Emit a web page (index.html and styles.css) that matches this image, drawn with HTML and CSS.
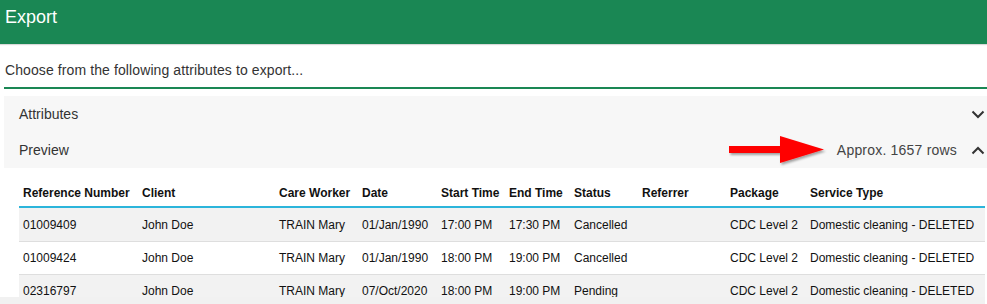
FILE: index.html
```html
<!DOCTYPE html>
<html lang="en">
<head>
    <meta charset="UTF-8">
    <meta name="viewport" content="width=device-width, initial-scale=1.0">
    <title>Export</title>
    <link rel="stylesheet" href="styles.css">
</head>
<body>
    <div class="modal-header">Export</div>

    <div class="modal-body">
        <p class="intro">Choose from the following attributes to export...</p>

        <!-- Accordion sections -->
        <div class="accordion">
            <div class="acc-row">
                <span class="acc-title">Attributes</span>
                <svg class="chevron" width="14" height="9" viewBox="0 0 14 9">
                    <polyline points="1.5,1.5 7,7 12.5,1.5" fill="none" stroke="#333" stroke-width="2"/>
                </svg>
            </div>
            <div class="acc-row">
                <span class="acc-title">Preview</span>
                <span class="row-count">
                    <svg class="arrow" width="98" height="32" viewBox="0 0 98 32">
                        <defs>
                            <filter id="shadow" x="-10%" y="-20%" width="130%" height="160%">
                                <feDropShadow dx="1.5" dy="2" stdDeviation="1.2" flood-color="#000" flood-opacity="0.35"/>
                            </filter>
                        </defs>
                        <g filter="url(#shadow)">
                            <rect x="0" y="10" width="54" height="7" fill="#ff0000"/>
                            <polygon points="51,0 95,13.5 51,27" fill="#ff0000"/>
                        </g>
                    </svg>
                    Approx. 1657 rows
                </span>
                <svg class="chevron" width="14" height="9" viewBox="0 0 14 9">
                    <polyline points="1.5,7.5 7,2 12.5,7.5" fill="none" stroke="#333" stroke-width="2"/>
                </svg>
            </div>
        </div>

        <table class="preview">
            <colgroup>
                <col style="width:119px">
                <col style="width:137px">
                <col style="width:83px">
                <col style="width:79px">
                <col style="width:68px">
                <col style="width:65px">
                <col style="width:68px">
                <col style="width:88px">
                <col style="width:80px">
                <col style="width:179px">
            </colgroup>
            <thead>
                <tr>
                    <th>Reference Number</th>
                    <th>Client</th>
                    <th>Care Worker</th>
                    <th>Date</th>
                    <th>Start Time</th>
                    <th>End Time</th>
                    <th>Status</th>
                    <th>Referrer</th>
                    <th>Package</th>
                    <th>Service Type</th>
                </tr>
            </thead>
            <tbody>
                <tr>
                    <td>01009409</td>
                    <td>John Doe</td>
                    <td>TRAIN Mary</td>
                    <td>01/Jan/1990</td>
                    <td>17:00 PM</td>
                    <td>17:30 PM</td>
                    <td>Cancelled</td>
                    <td></td>
                    <td>CDC Level 2</td>
                    <td>Domestic cleaning - DELETED</td>
                </tr>
                <tr>
                    <td>01009424</td>
                    <td>John Doe</td>
                    <td>TRAIN Mary</td>
                    <td>01/Jan/1990</td>
                    <td>18:00 PM</td>
                    <td>19:00 PM</td>
                    <td>Cancelled</td>
                    <td></td>
                    <td>CDC Level 2</td>
                    <td>Domestic cleaning - DELETED</td>
                </tr>
                <tr>
                    <td>02316797</td>
                    <td>John Doe</td>
                    <td>TRAIN Mary</td>
                    <td>07/Oct/2020</td>
                    <td>18:00 PM</td>
                    <td>19:00 PM</td>
                    <td>Pending</td>
                    <td></td>
                    <td>CDC Level 2</td>
                    <td>Domestic cleaning - DELETED</td>
                </tr>
            </tbody>
        </table>
    </div>

    <!-- horizontal scroll track -->
    <div class="scroll-track"></div>
</body>
</html>
```

FILE: styles.css
```css
body {
    margin: 0;
    padding: 0;
    font-family: "Liberation Sans", Arial, sans-serif;
    color: #333;
    background-color: #fff;
    overflow: hidden;
}

.modal-header {
    height: 44px;
    box-sizing: border-box;
    padding: 6px 5px 0;
    background-color: #1a8754;
    color: #fff;
    font-size: 18px;
    line-height: 22px;
    box-shadow: 0 1px 1px rgba(0, 0, 0, 0.15);
}

.modal-body {
    padding-left: 4px;
}

.intro {
    margin: 0 0 7px;
    padding: 18px 0 9px 1px;
    font-size: 14px;
    line-height: 16px;
    letter-spacing: 0.1px;
    border-bottom: 2px solid #1a8754;
}

.accordion {
    background-color: #f7f7f7;
}

.acc-row {
    display: flex;
    align-items: center;
    height: 36px;
    padding: 0 2px 0 15px;
    font-size: 14px;
}

.acc-title {
    flex: 1;
}

.row-count {
    display: flex;
    align-items: center;
    gap: 10px;
    margin-right: 14px;
    color: #444;
    letter-spacing: 0.2px;
}

.arrow {
    margin-top: 3px;
}

.chevron {
    display: block;
}

/* Preview table */
.preview {
    margin: 12px 0 0 15px;
    width: 966px;
    table-layout: fixed;
    border-collapse: collapse;
    font-size: 12px;
    color: #111;
}

.preview th {
    height: 26px;
    padding: 0 4px;
    text-align: left;
    font-weight: bold;
    white-space: nowrap;
    border-bottom: 2px solid #2cb5db;
}

.preview td {
    height: 32px;
    padding: 0 4px;
    white-space: nowrap;
    border-top: 1px solid #dedede;
}

.preview tbody tr:first-child td {
    border-top: none;
    height: 33px;
}

.preview tbody tr:nth-child(odd) {
    background-color: #f2f2f2;
}

.scroll-track {
    position: fixed;
    left: 0;
    bottom: 0;
    width: 985px;
    height: 7px;
    background-color: #f1f1f1;
}
```
